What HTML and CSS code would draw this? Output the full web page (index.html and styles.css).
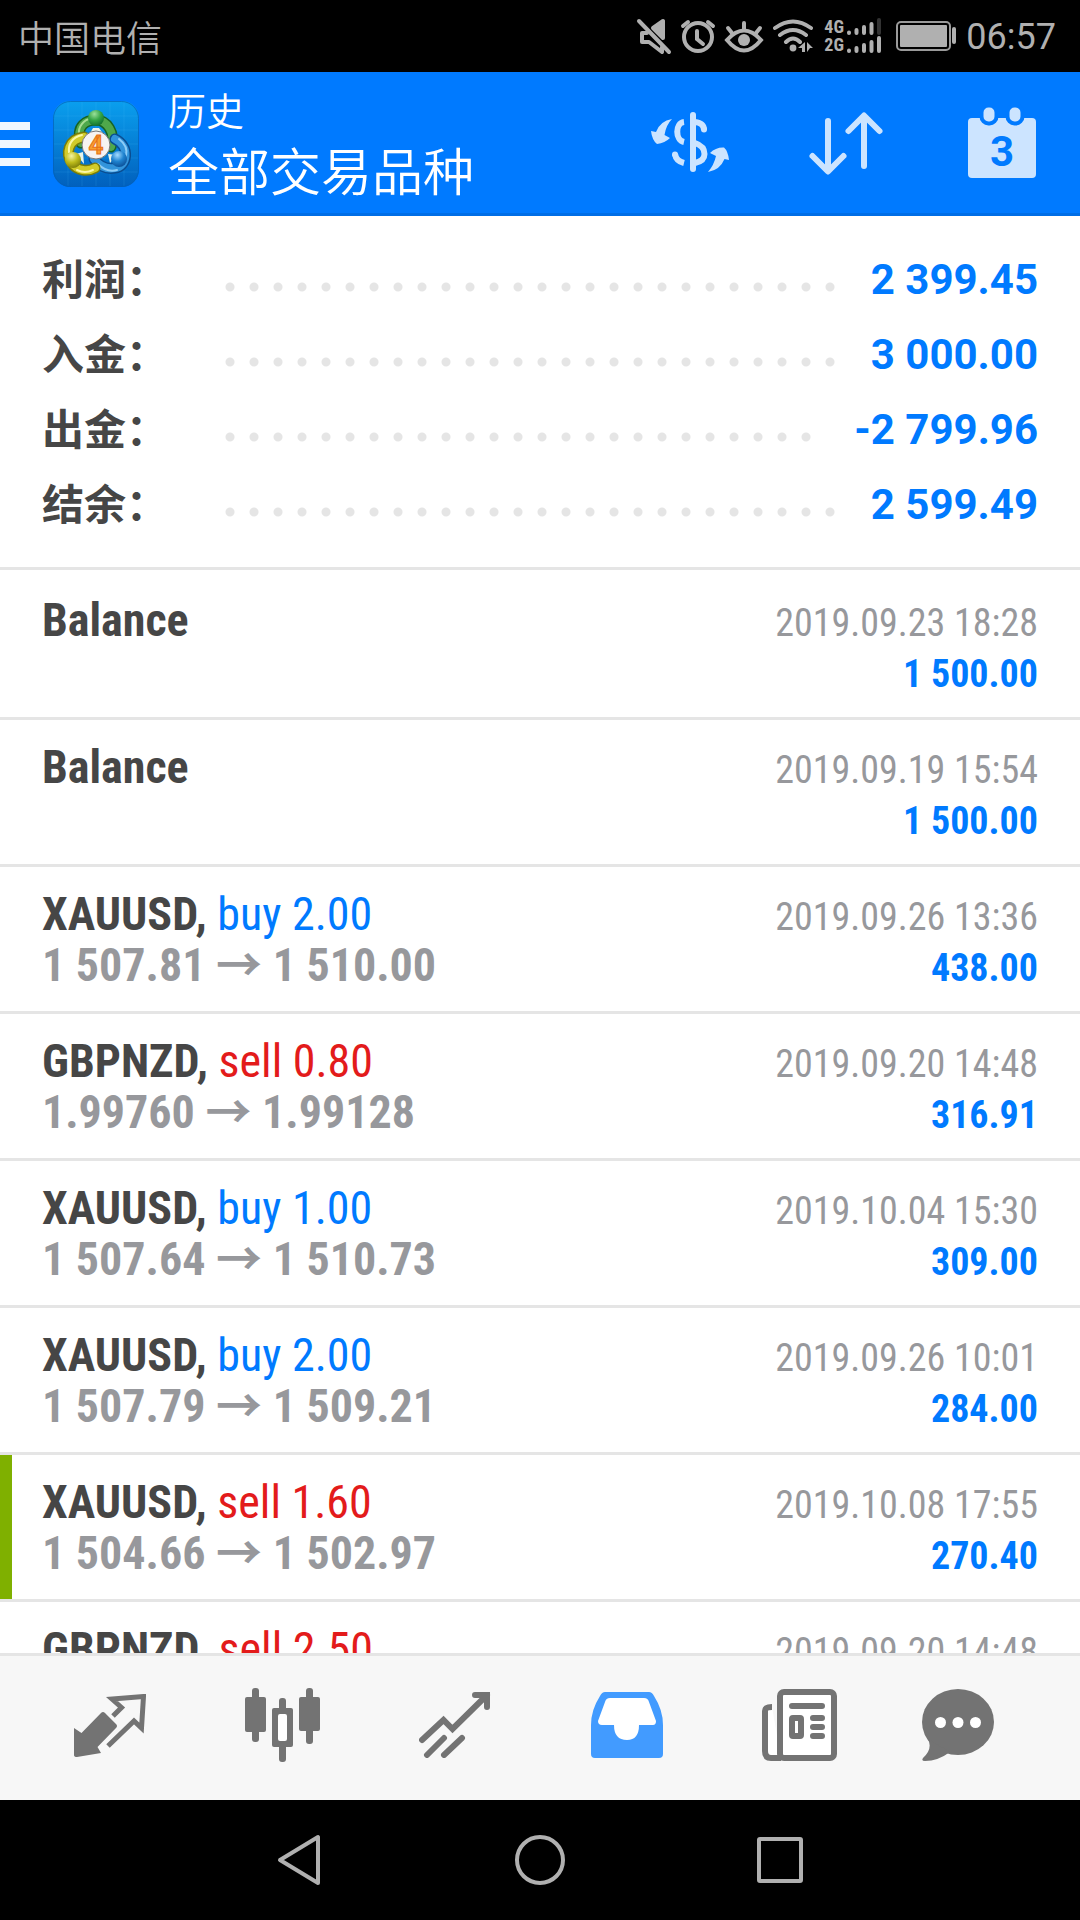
FILE: index.html
```html
<!DOCTYPE html>
<html lang="zh-CN">
<head>
<meta charset="utf-8">
<meta name="viewport" content="width=device-width, initial-scale=1">
<title>历史</title>
<link rel="stylesheet" href="styles.css">
</head>
<body>
<div class="status">
  <span class="carrier">中国电信</span>
  <div class="status-icons">
    <svg width="36" height="40" viewBox="0 0 36 40" class="line-icon"><path d="M11 17H6v9h7l13 10V31M17 12l10-7v17z" stroke-linejoin="round"/><path d="M17 12l10-7v17z" fill="#b0b0b0" stroke="none"/><path d="M3 5l30 31"/></svg>
    <svg width="36" height="40" viewBox="0 0 36 40" class="line-icon"><circle cx="18" cy="21" r="14"/><path d="M17 15v8l6 5M3 10l5-4M28 6l5 4"/></svg>
    <svg width="40" height="40" viewBox="0 0 40 40" class="line-icon"><path d="M3 24Q20 5 37 24Q20 45 3 24z"/><circle cx="20" cy="24" r="6" fill="#b0b0b0" stroke="none"/><path d="M20 7v7M4 12l4 5M36 12l-4 5"/></svg>
    <svg width="44" height="40" viewBox="0 0 44 40" class="line-icon"><path d="M3 12Q21-1 39 12M8 19Q21 9 34 19M14 26Q21 19 28 26"/><circle cx="21" cy="32" r="3.4" fill="#b0b0b0" stroke="none"/><path d="M26 32l7-6v10h-3v-4zM35 26l6 6h-3l-3 4z" fill="#b0b0b0" stroke="none"/></svg>
    <div class="networks">
      <span>4G</span><svg width="36" height="18" viewBox="0 0 36 18" class="bars"><path d="M3 14.500v.5M10.500 12v3M18 9v6M25.500 6v9"/><path class="bar-off" d="M33 2v13"/></svg>
      <span>2G</span><svg width="36" height="18" viewBox="0 0 36 18" class="bars"><path d="M3 14.500v.5M10.500 12v3M18 9v6M25.500 6v9M33 2v13"/></svg>
    </div>
    <svg width="64" height="32" viewBox="0 0 64 32"><rect x="3" y="2" width="53" height="28" rx="4" fill="none" stroke="#9a9a9a" stroke-width="2"/><rect x="6" y="5" width="47" height="22" rx="1" fill="#b0b0b0"/><rect x="58" y="7" width="4" height="17" rx="2" fill="#b0b0b0"/></svg>
  </div>
  <time class="clock">06:57</time>
</div>

<header class="header">
  <button class="menu" aria-label="菜单"><i></i><i></i><i></i></button>
  <svg class="logo" width="86" height="86" viewBox="0 0 86 86">
    <defs>
      <linearGradient id="sky" x1="0" y1="0" x2="0" y2="1"><stop offset="0" stop-color="#0a9fee"/><stop offset="1" stop-color="#0160bd"/></linearGradient>
      <radialGradient id="gh" cx=".4" cy=".25" r=".8"><stop offset="0" stop-color="#9be09a"/><stop offset=".5" stop-color="#35a545"/><stop offset="1" stop-color="#0d6a2a"/></radialGradient>
      <radialGradient id="yh" cx=".4" cy=".25" r=".8"><stop offset="0" stop-color="#f4f3a0"/><stop offset=".5" stop-color="#bfbd1c"/><stop offset="1" stop-color="#7a7a08"/></radialGradient>
      <radialGradient id="bh" cx=".4" cy=".25" r=".8"><stop offset="0" stop-color="#a5dcff"/><stop offset=".5" stop-color="#1f83d0"/><stop offset="1" stop-color="#0a4c93"/></radialGradient>
    </defs>
    <rect width="86" height="86" rx="17" fill="url(#sky)"/>
    <path d="M15 1v84M29 1v84M43 1v84M57 1v84M71 1v84M1 15h84M1 29h84M1 43h84M1 57h84M1 71h84" stroke="#5cc5ff" stroke-opacity=".14"/>
    <rect x=".5" y=".5" width="85" height="85" rx="17" fill="none" stroke="#0460b8" stroke-opacity=".7"/>
    <g fill="none" stroke-linecap="round">
      <path d="M28 42C22 24 34 19 43 19C54 19 63 32 58 46" stroke="#176325" stroke-width="11"/>
      <path d="M28 42C22 24 34 19 43 19C54 19 63 32 58 46" stroke="#4fa84b" stroke-width="8"/>
      <path d="M26 33C25 26 31 18 38 18" stroke="#a7dc93" stroke-width="2"/>
      <path d="M62 38C78 46 74 66 62 67C51 69 44 62 41 58" stroke="#0a4d91" stroke-width="11"/>
      <path d="M62 38C78 46 74 66 62 67C51 69 44 62 41 58" stroke="#3294db" stroke-width="8"/>
      <path d="M66 38C74 44 74 51 73 55M45 63Q54 72 64 69" stroke="#8dcdf8" stroke-width="2"/>
      <path d="M31 36C15 38 12 53 19 62C24 70 35 71 42 67" stroke="#797c0a" stroke-width="11"/>
      <path d="M31 36C15 38 12 53 19 62C24 70 35 71 42 67" stroke="#d1cb2a" stroke-width="8"/>
      <path d="M29 34C19 36 15 44 16 51M24 69Q32 73 40 69" stroke="#fbf7a6" stroke-width="2"/>
    </g>
    <path d="M36 34l4-7h6l5 7zM23 53l7-2 1 12zM55 53l9 1-7 8z" fill="#e8f4ea"/>
    <circle cx="43" cy="17" r="8" fill="url(#gh)"/><circle cx="20" cy="59" r="8" fill="url(#yh)"/><circle cx="66" cy="58" r="8" fill="url(#bh)"/>
    <circle cx="43" cy="44" r="14" fill="#f6f3f2" stroke="#777" stroke-width="1"/>
    <text x="43" y="53" text-anchor="middle" class="logo-digit">4</text>
  </svg>
  <div class="titles"><p class="section">历史</p><h1 class="symbols">全部交易品种</h1></div>
  <div class="actions">
    <button aria-label="货币"><svg width="84" height="72" viewBox="0 0 84 72"><g fill="#cce4ff"><path d="M24 11Q12 13 8 24L3 23Q4 32 9 36Q17 35 22 30L16.500 27Q18 17 24 11zM60 64Q72 62 76.500 51L81 52Q80 43 76 39.500Q68 39 62 45L68 48Q66 57 60 64z"/><circle cx="27" cy="46.500" r="3"/><circle cx="56" cy="21.500" r="3"/></g><g fill="none" stroke="#cce4ff" stroke-width="6"><path d="M45 7V61" stroke-linecap="round"/><path d="M36 14C27 15 27 32 36 34M27 46Q28 53 36 55M47 14Q56 15 56 22M47 35Q56.500 38 56.500 46Q56.500 53 47 55"/></g></svg></button>
    <button aria-label="排序"><svg width="80" height="72" viewBox="2 0 80 72"><path d="M22 13V63M6.500 48L22 63.500L37.500 48M58 58V8M42.500 23L58 7.500L73.500 23" fill="none" stroke="#cce4ff" stroke-width="6" stroke-linecap="round" stroke-linejoin="round"/></svg></button>
    <button aria-label="日期"><svg width="76" height="80" viewBox="0 0 76 80"><rect x="4" y="14" width="68" height="60" rx="4" fill="#cce4ff"/><g fill="#cce4ff" stroke="#007aff" stroke-width="4"><rect x="17.500" y="1.500" width="15" height="18" rx="7"/><rect x="43.500" y="1.500" width="15" height="18" rx="7"/></g><text x="38" y="62" text-anchor="middle" class="day">3</text></svg></button>
  </div>
</header>

<main class="content">
  <dl class="summary">
    <div><dt>利润：</dt><dd>2 399.45</dd></div>
    <div><dt>入金：</dt><dd>3 000.00</dd></div>
    <div><dt>出金：</dt><dd>-2 799.96</dd></div>
    <div><dt>结余：</dt><dd>2 599.49</dd></div>
  </dl>
  <ul class="deals">
    <li><div class="row"><b>Balance</b><time>2019.09.23 18:28</time></div><div class="row"><span class="prices"></span><span class="profit">1 500.00</span></div></li>
    <li><div class="row"><b>Balance</b><time>2019.09.19 15:54</time></div><div class="row"><span class="prices"></span><span class="profit">1 500.00</span></div></li>
    <li><div class="row"><b>XAUUSD, <span class="buy">buy 2.00</span></b><time>2019.09.26 13:36</time></div><div class="row"><span class="prices">1 507.81 → 1 510.00</span><span class="profit">438.00</span></div></li>
    <li><div class="row"><b>GBPNZD, <span class="sell">sell 0.80</span></b><time>2019.09.20 14:48</time></div><div class="row"><span class="prices">1.99760 → 1.99128</span><span class="profit">316.91</span></div></li>
    <li><div class="row"><b>XAUUSD, <span class="buy">buy 1.00</span></b><time>2019.10.04 15:30</time></div><div class="row"><span class="prices">1 507.64 → 1 510.73</span><span class="profit">309.00</span></div></li>
    <li><div class="row"><b>XAUUSD, <span class="buy">buy 2.00</span></b><time>2019.09.26 10:01</time></div><div class="row"><span class="prices">1 507.79 → 1 509.21</span><span class="profit">284.00</span></div></li>
    <li class="marked"><div class="row"><b>XAUUSD, <span class="sell">sell 1.60</span></b><time>2019.10.08 17:55</time></div><div class="row"><span class="prices">1 504.66 → 1 502.97</span><span class="profit">270.40</span></div></li>
    <li><div class="row"><b>GBPNZD, <span class="sell">sell 2.50</span></b><time>2019.09.20 14:48</time></div></li>
  </ul>
</main>

<nav class="tabs">
  <button aria-label="行情"><svg width="72" height="63" viewBox="0 0 72 63"><path d="M0 34L7.500 39L27 19Q29 17 31 19L42 30Q44 32 42 34L23.500 53L27 59L3 63Q0 63 0 61z" fill="#737373"/><path d="M39 22L47.500 13.500L38 5L69.500 2.500L67.500 34L60 27L34 52" fill="none" stroke="#737373" stroke-width="5"/></svg></button>
  <button aria-label="图表"><svg width="75" height="74" viewBox="0 0 75 74" fill="#737373"><rect y="9" width="21" height="35" rx="2"/><rect x="7" width="7" height="54" rx="3"/><rect x="54" y="9" width="21" height="34" rx="2"/><rect x="61" width="7" height="56" rx="3"/><rect x="34" y="10" width="7" height="64" rx="3"/><rect x="27" y="20" width="21" height="39" rx="2"/><rect x="33" y="26" width="9" height="27" rx="2" fill="#fff"/></svg></button>
  <button aria-label="交易"><svg width="72" height="66" viewBox="0 0 72 66"><path d="M3 48L24.500 28L33.500 37L68 3M56 3H68V15M8 63L25 46M25 63L43 46" fill="none" stroke="#737373" stroke-width="6" stroke-linecap="round"/></svg></button>
  <button aria-label="历史" aria-current="page"><svg width="72" height="66" viewBox="0 0 72 66"><path d="M14 0H58Q61 0 63 4Q72 18 72 33V62Q72 66 68 66H4Q0 66 0 62V33Q0 18 9 4Q11 0 14 0z" fill="#429bff"/><path d="M19 6H53Q57 6 58 10L65 29Q65 33 62 33H48Q48 48 36 48Q23 48 23 33H11Q7 33 7 29L14 10Q15 6 19 6z" fill="#fff"/></svg></button>
  <button aria-label="新闻"><svg width="75" height="72" viewBox="0 0 75 72" fill="none" stroke="#737373" stroke-width="6"><path d="M10 18Q3 18 3 22V62Q3 69 9 69H19" fill="#fff"/><rect x="18" y="3" width="54" height="66" rx="4" fill="#fff"/><path d="M30 17H60M51 29H60M51 38H60M51 47H60" stroke-linecap="round"/><rect x="30" y="29" width="9" height="18" rx="1"/></svg></button>
  <button aria-label="消息"><svg width="72" height="72" viewBox="0 0 72 72" fill="#737373"><ellipse cx="36" cy="33" rx="36" ry="33"/><path d="M6 50Q11 60 1 69Q-1 72 3 72Q16 72 28 63z"/><g fill="#fff"><circle cx="18.500" cy="33.500" r="5.500"/><circle cx="36" cy="33.500" r="5.500"/><circle cx="53.500" cy="33.500" r="5.500"/></g></svg></button>
</nav>

<nav class="system">
  <button aria-label="返回"><svg width="52" height="52" viewBox="0 0 52 52"><path d="M44 3V49L6 26z"/></svg></button>
  <button aria-label="主页"><svg width="52" height="52" viewBox="0 0 52 52"><circle cx="26" cy="26" r="23"/></svg></button>
  <button aria-label="最近"><svg width="52" height="52" viewBox="0 0 52 52"><rect x="5" y="5" width="42" height="42" rx="1"/></svg></button>
</nav>
</body>
</html>
```
FILE: styles.css
```css
* { box-sizing: border-box; margin: 0; padding: 0; }

body {
  display: flex;
  flex-direction: column;
  height: 100vh;
  background: #fff;
  color: #464646;
  font-family: Roboto, "Noto Sans CJK SC", sans-serif;
}

button {
  display: flex;
  align-items: center;
  justify-content: center;
  border: 0;
  background: none;
}

svg { display: block; }

/* Status bar */
.status {
  display: flex;
  align-items: center;
  flex: none;
  height: 72px;
  padding: 0 24px 0 18px;
  background: #000;
  color: #b0b0b0;
}
.carrier { flex: 1; font-size: 36px; font-weight: 350; }
.status-icons { display: flex; align-items: center; gap: 8px; }
.line-icon { fill: none; stroke: #b0b0b0; stroke-width: 4; stroke-linecap: round; }
.networks {
  display: grid;
  grid-template-columns: 22px 36px;
  margin-right: 4px;
  font: 700 18px/18px "Roboto Condensed", "Liberation Sans Narrow", sans-serif;
}
.bars { fill: none; stroke: #b0b0b0; stroke-width: 4; stroke-linecap: round; }
.bar-off { stroke: #333; }
.clock { margin-left: 8px; padding-top: 2px; font-size: 36px; }

/* App header */
.header {
  display: flex;
  align-items: center;
  flex: none;
  height: 144px;
  padding: 2px 40px 0 0;
  border-bottom: 3px solid #006ee6;
  background: #007aff;
  color: #fff;
}
.menu { flex-direction: column; align-items: stretch; gap: 10px; width: 30px; }
.menu i { height: 8px; background: #f0f7ff; }
.logo { margin-left: 23px; }
.logo-digit { font: 700 26px Roboto, sans-serif; fill: #f8a030; stroke: #e87018; stroke-width: 1; }
.titles { flex: 1; margin-left: 29px; padding-top: 6px; font-weight: 350; }
.section { font-size: 38px; line-height: 54px; }
.symbols { font-size: 51px; font-weight: 350; line-height: 70px; }
.actions { display: flex; align-items: center; gap: 76px; }
.day { font: 700 42px Roboto, sans-serif; fill: #007aff; }

/* Account totals */
.content { flex: 1; min-height: 0; overflow: hidden; }
.summary { padding: 26px 42px 25px; border-bottom: 3px solid #e5e5e5; }
.summary div { display: flex; align-items: center; height: 75px; font-size: 42px; font-weight: 700; }
.summary dt { width: 176px; padding-bottom: 6px; }
.summary dd { display: flex; flex: 1; align-items: center; color: #007aff; }
.summary dd::before {
  content: "";
  flex: 1;
  height: 24px;
  margin: 14px 32px 0 0;
  background: radial-gradient(circle, #e5e5e5 4px, transparent 5px) 0 0 / 24px 24px repeat-x;
}

/* Deals */
.deals {
  list-style: none;
  font-family: "Roboto Condensed", "Liberation Sans Narrow", "Noto Sans CJK SC", sans-serif;
  font-size: 46px;
}
.deals li { padding: 21px 42px; border-bottom: 3px solid #e5e5e5; }
.deals li:first-child { padding-top: 24px; }
.deals .marked { box-shadow: inset 12px 0 #7fb000; }
.row { display: flex; align-items: baseline; justify-content: space-between; height: 51px; line-height: 52px; }
.row time { color: #97989c; font-size: 38px; }
.buy, .sell { font-weight: 400; }
.buy { color: #007aff; }
.sell { color: #e31b1b; }
.prices { color: #97989c; font-weight: 700; }
.prices:empty::before { content: "\200b"; }
.profit { color: #007aff; font-size: 38px; font-weight: 700; }

/* Tab bar */
.tabs {
  display: grid;
  grid-template-columns: repeat(5, 1fr) 144px;
  flex: none;
  height: 147px;
  padding: 0 50px 6px 24px;
  border-top: 3px solid #e5e5e5;
  background: #f7f7f7;
}

/* System keys */
.system {
  display: grid;
  grid-template-columns: repeat(3, 240px);
  justify-content: center;
  flex: none;
  height: 120px;
  background: #000;
}
.system svg { fill: none; stroke: #b0b0b0; stroke-width: 4; stroke-linejoin: round; }
```
